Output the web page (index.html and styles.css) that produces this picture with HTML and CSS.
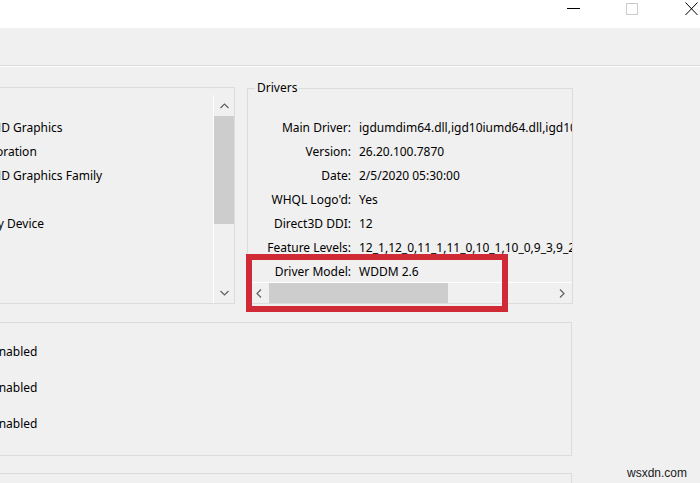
FILE: index.html
```html
<!DOCTYPE html>
<html lang="en">
<head>
<meta charset="utf-8">
<title>DirectX Diagnostic Tool</title>
<link rel="stylesheet" href="styles.css">
</head>
<body>
<div class="window">
  <div class="titlebar">
    <div class="cap-btn">
      <svg width="13" height="14" viewBox="0 0 13 14"><line x1="0" y1="6.5" x2="13" y2="6.5" stroke="#000" stroke-width="1"/></svg>
    </div>
    <div class="cap-btn">
      <svg width="13" height="14" viewBox="0 0 13 14"><rect x="0.5" y="1.5" width="11" height="11" fill="none" stroke="#cccccc" stroke-width="1"/></svg>
    </div>
    <div class="cap-btn">
      <svg width="13" height="14" viewBox="0 0 13 14"><path d="M0.5 0.5 L12.5 13 M12.5 0.5 L0.5 13" fill="none" stroke="#000" stroke-width="1"/></svg>
    </div>
  </div>
  <div class="tabbar"></div>
  <div class="page">
    <div class="top-row">
      <div class="group device">
        <div class="legend">Device</div>
        <div class="device-body">
          <div class="list">
            <div class="row"><span class="lbl">Name:</span><span class="val">Intel(R) UHD Graphics</span></div>
            <div class="row"><span class="lbl">Manufacturer:</span><span class="val">Intel Corporation</span></div>
            <div class="row"><span class="lbl">Chip Type:</span><span class="val">Intel(R) UHD Graphics Family</span></div>
            <div class="row"><span class="lbl">DAC Type:</span><span class="val">Internal</span></div>
            <div class="row"><span class="lbl">Device Type:</span><span class="val">Full Display Device</span></div>
          </div>
          <div class="vscroll">
            <div class="sb-btn">
              <svg width="9" height="6" viewBox="0 0 9 6"><polyline points="0.5,5 4.5,1 8.5,5" fill="none" stroke="#606060" stroke-width="1.2"/></svg>
            </div>
            <div class="vthumb"></div>
            <div class="vtrack"></div>
            <div class="sb-btn">
              <svg width="9" height="6" viewBox="0 0 9 6"><polyline points="0.5,1 4.5,5 8.5,1" fill="none" stroke="#606060" stroke-width="1.2"/></svg>
            </div>
          </div>
        </div>
      </div>
      <div class="group drivers">
        <div class="legend">Drivers</div>
        <div class="drv-body">
          <div class="drv-list">
            <div class="drow"><span class="lbl">Main Driver:</span><span class="val">igdumdim64.dll,igd10iumd64.dll,igd10iumd64.dll,igd12umd64.dll</span></div>
            <div class="drow"><span class="lbl">Version:</span><span class="val">26.20.100.7870</span></div>
            <div class="drow"><span class="lbl">Date:</span><span class="val">2/5/2020 05:30:00</span></div>
            <div class="drow"><span class="lbl">WHQL Logo'd:</span><span class="val">Yes</span></div>
            <div class="drow"><span class="lbl">Direct3D DDI:</span><span class="val">12</span></div>
            <div class="drow"><span class="lbl">Feature Levels:</span><span class="val">12_1,12_0,11_1,11_0,10_1,10_0,9_3,9_2,9_1</span></div>
            <div class="drow"><span class="lbl">Driver Model:</span><span class="val">WDDM 2.6</span></div>
          </div>
          <div class="hscroll">
            <div class="h-btn">
              <svg width="6" height="9" viewBox="0 0 6 9"><polyline points="5,0.5 1,4.5 5,8.5" fill="none" stroke="#606060" stroke-width="1.2"/></svg>
            </div>
            <div class="hthumb"></div>
            <div class="htrack"></div>
            <div class="h-btn">
              <svg width="6" height="9" viewBox="0 0 6 9"><polyline points="1,0.5 5,4.5 1,8.5" fill="none" stroke="#606060" stroke-width="1.2"/></svg>
            </div>
          </div>
        </div>
      </div>
    </div>
    <div class="group features">
      <div class="legend">DirectX Features</div>
      <div class="feat-list">
        <div class="frow"><span class="lbl">DirectDraw Acceleration:</span><span class="val">Enabled</span></div>
        <div class="frow"><span class="lbl">Direct3D Acceleration:</span><span class="val">Enabled</span></div>
        <div class="frow"><span class="lbl">AGP Texture Acceleration:</span><span class="val">Enabled</span></div>
      </div>
    </div>
    <div class="group notes">
      <div class="legend">Notes</div>
    </div>
  </div>
  <div class="highlight"></div>
  <div class="watermark">wsxdn.com</div>
</div>
</body>
</html>
```

FILE: styles.css
```css
html, body {
  margin: 0;
  padding: 0;
}

body {
  font-family: "Noto Sans", "Open Sans", sans-serif;
  font-size: 12px;
  color: #000;
  background: #f0f0f0;
}

.window {
  width: 700px;
  height: 483px;
  overflow: hidden;
  position: relative;
  background: #f0f0f0;
}

/* title bar */
.titlebar {
  height: 28px;
  background: #fff;
  display: flex;
  justify-content: flex-end;
  margin-right: -21px;
}

.cap-btn {
  width: 59px;
  height: 28px;
  box-sizing: border-box;
  padding-top: 2px;
  display: flex;
  justify-content: center;
  align-items: flex-start;
}

.cap-btn svg {
  display: block;
}

/* tab strip */
.tabbar {
  height: 37px;
  border-bottom: 1px solid #d9d9d9;
  box-shadow: 0 1px 0 #ffffff;
}

.page {
  padding-top: 21px;
}

/* group boxes */
.group {
  border: 1px solid #dcdcdc;
  box-sizing: border-box;
}

.legend {
  margin: -9px 0 0 7px;
  padding: 0 2px;
  width: max-content;
  line-height: 16px;
  background: #f0f0f0;
  white-space: nowrap;
}

.top-row {
  display: flex;
  align-items: flex-start;
  gap: 12px;
  margin-left: -165px;
}

.device {
  width: 400px;
  flex: none;
}

.drivers {
  width: 326px;
  flex: none;
  margin-top: 1px;
}

.device-body {
  height: 208px;
  display: flex;
}

.list {
  flex: 1;
  overflow: hidden;
  padding-top: 21px;
}

.row {
  display: grid;
  grid-template-columns: 96px auto;
  column-gap: 8px;
  line-height: 24px;
  white-space: nowrap;
}

.lbl {
  text-align: right;
  white-space: nowrap;
}

.val {
  white-space: nowrap;
}

/* vertical scrollbar */
.vscroll {
  width: 20px;
  border-left: 1px solid #ffffff;
  display: flex;
  flex-direction: column;
}

.sb-btn {
  height: 21px;
  flex: none;
  display: flex;
  align-items: center;
  justify-content: center;
}

.sb-btn svg,
.h-btn svg {
  display: block;
}

.vthumb {
  height: 108px;
  flex: none;
  background: #cdcdcd;
}

.vtrack {
  flex: 1;
}

/* drivers list */
.drv-body {
  height: 207px;
  display: flex;
  flex-direction: column;
}

.drv-list {
  flex: 1;
  overflow: hidden;
  padding-top: 20px;
  min-height: 0;
}

.drow {
  display: grid;
  grid-template-columns: 103px auto;
  column-gap: 8px;
  line-height: 24px;
  white-space: nowrap;
}

/* horizontal scrollbar */
.hscroll {
  height: 21px;
  flex: none;
  box-sizing: border-box;
  border-top: 1px solid #ffffff;
  display: flex;
}

.h-btn {
  width: 21px;
  flex: none;
  display: flex;
  align-items: center;
  justify-content: center;
}

.hthumb {
  width: 179px;
  flex: none;
  background: #cdcdcd;
}

.htrack {
  flex: 1;
}

/* lower groups */
.features {
  margin: 18px 0 0 -165px;
  width: 737px;
  height: 134px;
}

.feat-list {
  padding-top: 4px;
}

.frow {
  display: grid;
  grid-template-columns: 148px auto;
  column-gap: 8px;
  line-height: 36px;
  white-space: nowrap;
}

.notes {
  margin: 17px 0 0 -165px;
  width: 737px;
  height: 60px;
}

/* annotation overlay */
.highlight {
  position: absolute;
  left: 246px;
  top: 254px;
  width: 262px;
  height: 58px;
  box-sizing: border-box;
  border: 6px solid #d02a36;
}

.watermark {
  position: absolute;
  left: 627px;
  top: 465px;
  font-family: "Liberation Sans", Arial, sans-serif;
  font-size: 12px;
  line-height: 16px;
  color: #1a1a1a;
}
```
